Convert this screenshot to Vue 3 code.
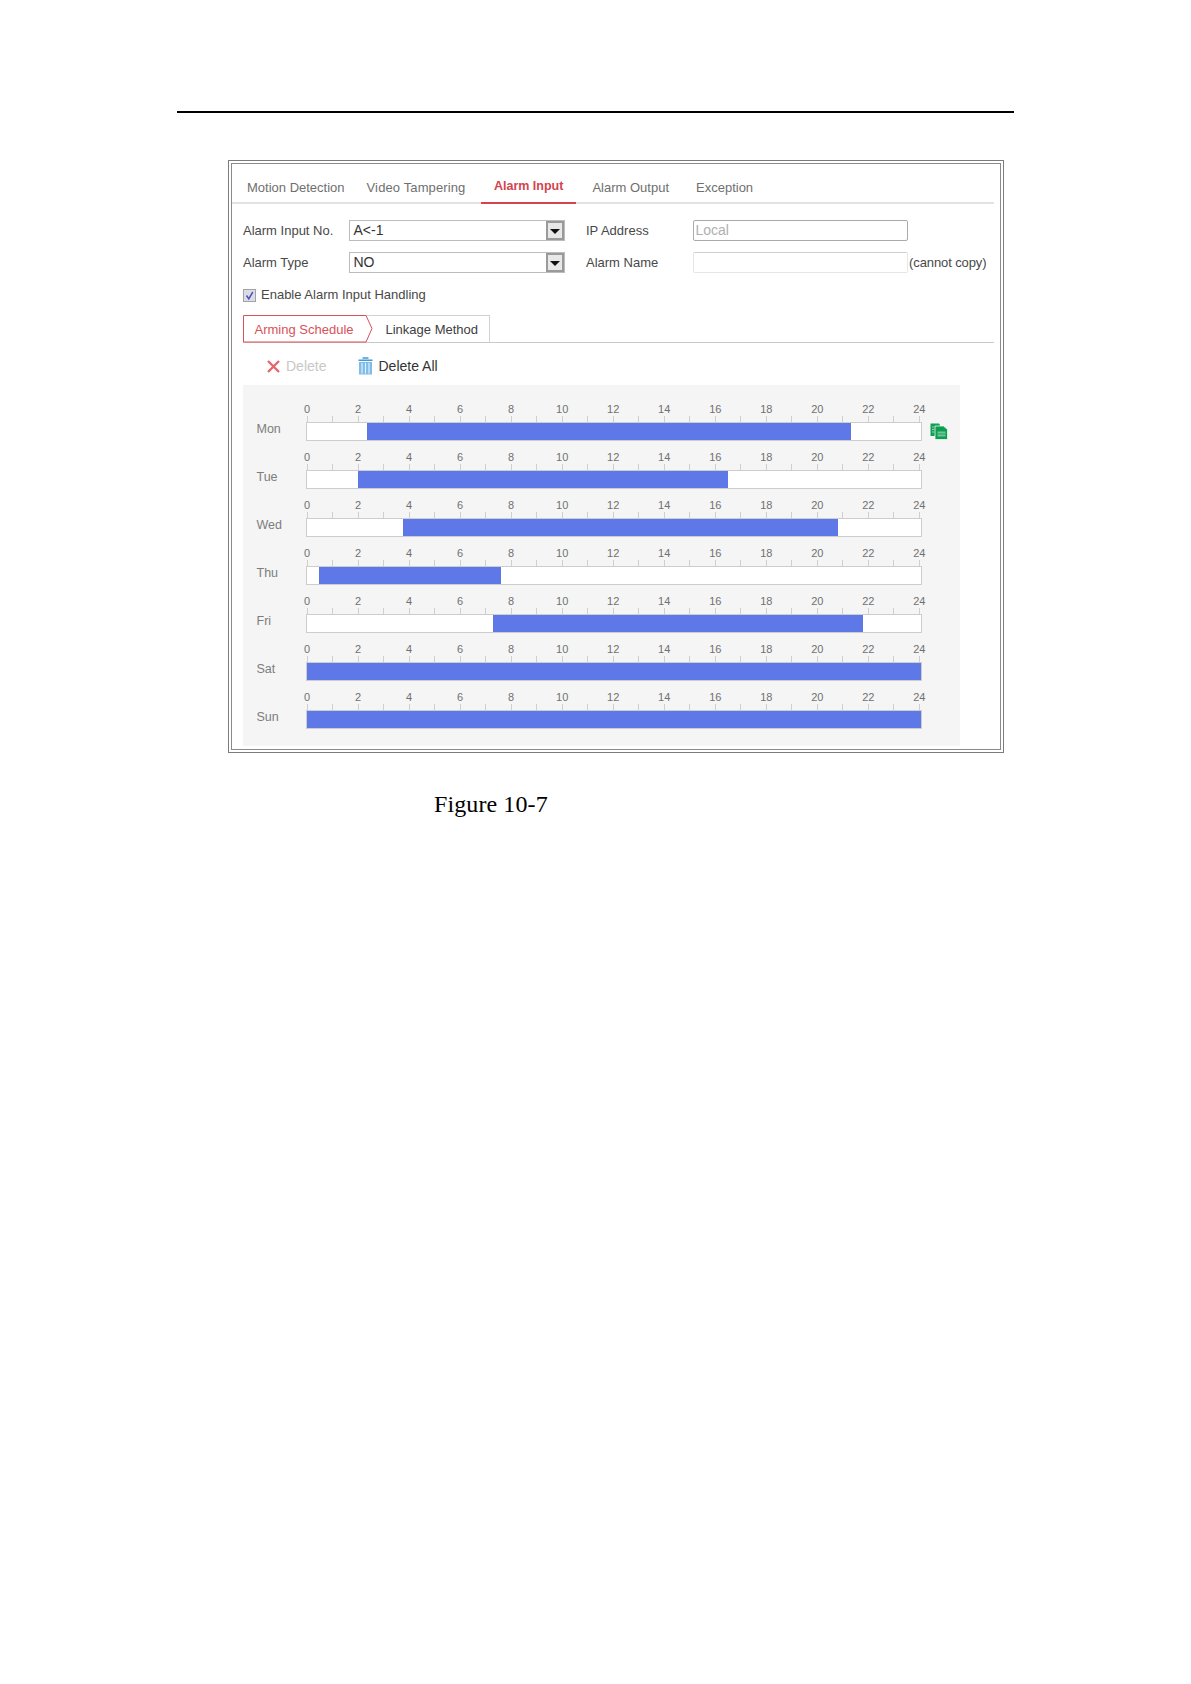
<script setup>
const tabs = [
  { label: 'Motion Detection' },
  { label: 'Video Tampering' },
  { label: 'Alarm Input', active: true },
  { label: 'Alarm Output' },
  { label: 'Exception' }
]
const hourLabels = [0, 2, 4, 6, 8, 10, 12, 14, 16, 18, 20, 22, 24]
const ticks = Array.from({ length: 25 }, (_, i) => i)
const days = [
  { name: 'Mon', from: 2.36, to: 21.25, copy: true },
  { name: 'Tue', from: 2.0, to: 16.46 },
  { name: 'Wed', from: 3.75, to: 20.77 },
  { name: 'Thu', from: 0.5, to: 7.58 },
  { name: 'Fri', from: 7.28, to: 21.75 },
  { name: 'Sat', from: 0, to: 24 },
  { name: 'Sun', from: 0, to: 24 }
]
const fillStyle = (d) => ({
  marginLeft: (d.from / 24) * 100 + '%',
  width: ((d.to - d.from) / 24) * 100 + '%'
})
</script>

<template>
  <div class="page">
    <div class="rule"></div>
    <div class="frame">
      <div class="inner">
        <div class="tabs">
          <div v-for="t in tabs" :key="t.label" class="tab" :class="{ active: t.active }">{{ t.label }}</div>
        </div>

        <div class="form">
          <div class="label">Alarm Input No.</div>
          <div class="select"><span>A&lt;-1</span><i class="drop"></i></div>
          <div class="label far">IP Address</div>
          <div class="input ip">Local</div>
          <div></div>

          <div class="label">Alarm Type</div>
          <div class="select"><span>NO</span><i class="drop"></i></div>
          <div class="label far">Alarm Name</div>
          <div class="input name"></div>
          <div class="label note">(cannot copy)</div>
        </div>

        <div class="check-row">
          <svg class="check" width="13" height="13" viewBox="0 0 13 13">
            <rect x="0.5" y="0.5" width="12" height="12" fill="#dcdce4" stroke="#a2a2ac" />
            <path d="M3.5 6.5 L5.8 9.8 L9.8 3" fill="none" stroke="#4a55b8" stroke-width="1.5" />
          </svg>
          <span>Enable Alarm Input Handling</span>
        </div>

        <div class="subtabs">
          <div class="sub active">
            <svg class="chevron" width="130" height="28" viewBox="0 0 130 28">
              <path d="M0.5 0.5 H123 L129 13.5 L123 27 H0.5 Z" fill="#fff" stroke="#d9505a" />
            </svg>
            <span class="sub-text">Arming Schedule</span>
          </div>
          <div class="sub link">Linkage Method</div>
        </div>

        <div class="actions">
          <svg class="x-icon" width="13" height="13" viewBox="0 0 13 13">
            <path d="M1 1 L12 12 M12 1 L1 12" stroke="#e8636a" stroke-width="2.3" fill="none" />
          </svg>
          <span class="del off">Delete</span>
          <svg class="trash" width="15" height="18" viewBox="0 0 15 18">
            <path d="M4.5 1 H10.5 M0.5 3.2 H14.5" stroke="#3d9bdc" stroke-width="1.6" fill="none" />
            <path d="M1 5 H14 V17.5 H1 Z" fill="#7fbce8" />
            <path d="M4 6 V16.5 M7.5 6 V16.5 M11 6 V16.5" stroke="#e6f2fb" stroke-width="1.1" fill="none" />
          </svg>
          <span class="del on">Delete All</span>
        </div>

        <div class="panel">
          <div v-for="d in days" :key="d.name" class="day">
            <div class="ruler">
              <div class="nums"><span v-for="h in hourLabels" :key="h" class="num"><b>{{ h }}</b></span></div>
              <div class="ticks"><i v-for="k in ticks" :key="k" class="tick"></i></div>
            </div>
            <div class="day-name">{{ d.name }}</div>
            <div class="bar"><div class="fill" :style="fillStyle(d)"></div></div>
            <svg v-if="d.copy" class="copy" width="18" height="17" viewBox="0 0 18 17">
              <path d="M0.5 0.5 H9 L10 2 V13 H0.5 Z" fill="#129e55" />
              <path d="M5 3 H13.5 L17.5 6.5 V16.5 H5 Z" fill="#0c9e50" stroke="#f5f5f5" stroke-width="0.8" />
              <path d="M7.5 8.5 H15.5 V13.5 H7.5 Z" fill="#6cc796" />
              <path d="M7.5 11 H15.5" stroke="#0c9e50" stroke-width="0.8" />
              <path d="M2 4 H4 M2 6.5 H4 M2 9 H4" stroke="#8fd3ae" stroke-width="1" />
            </svg>
          </div>
        </div>
      </div>
    </div>
    <div class="caption">Figure 10-7</div>
  </div>
</template>

<style>
html, body { margin: 0; background: #fff; }
</style>

<style scoped>
* { box-sizing: border-box; }
.page {
  width: 1191px;
  height: 1684px;
  padding-top: 111px;
  background: #fff;
  font-family: "Liberation Sans", Arial, sans-serif;
  font-size: 13px;
  color: #444;
  overflow: hidden;
}
.rule { height: 2px; margin: 0 177px; background: #000; }
.frame {
  width: 776px;
  height: 593px;
  margin: 47px 0 0 228px;
  border: 1px solid #7c7c7c;
  padding: 2px;
}
.inner { height: 100%; border: 1px solid #8a8a8a; background: #fff; }

.tabs {
  display: flex;
  height: 40px;
  margin-right: 6px;
  padding-left: 3.5px;
  border-bottom: 2px solid #e2e2e2;
}
.tab {
  height: 40px;
  padding: 14px 11.5px 0;
  line-height: 20px;
  color: #6f6f6f;
}
.tab:nth-child(2) { margin-left: -1px; letter-spacing: 0.12px; }
.tab:nth-child(5) { margin-left: 4px; }
.tab.active {
  margin: 0 5px 0 4.5px;
  padding: 12px 12.5px 0;
  font-size: 12.5px;
  font-weight: bold;
  color: #d4434f;
  border-bottom: 2px solid #d4434f;
}

.form {
  display: grid;
  grid-template-columns: 106px 216px 128px 215px auto;
  grid-auto-rows: 21px;
  row-gap: 11px;
  margin: 16px 0 0 11px;
}
.label { line-height: 21px; color: #484848; }
.label.far { margin-left: 21px; }
.select {
  display: flex;
  justify-content: space-between;
  border: 1px solid #bcbcbc;
  padding-left: 3.5px;
  font-size: 14px;
  line-height: 19px;
  color: #333;
}
.drop {
  position: relative;
  width: 18px;
  height: 19px;
  border: 2px solid #9a9a9a;
  background: #e8e8e8;
}
.drop::after {
  content: "";
  position: absolute;
  left: 2px;
  top: 6px;
  border: 5px solid transparent;
  border-top: 5px solid #111;
  border-bottom: 0;
}
.input {
  border-radius: 2px;
  padding-left: 1.5px;
  font-size: 14px;
  line-height: 19px;
}
.input.ip { border: 1px solid #aaa; color: #b0b0b0; }
.input.name { border: 1px solid #e6e6e6; border-top-color: #cfcfcf; }
.note { padding-left: 1px; white-space: nowrap; letter-spacing: -0.1px; }

.check-row {
  display: flex;
  align-items: center;
  gap: 5px;
  height: 20px;
  margin: 11px 0 0 11px;
  color: #484848;
}
.check { margin-top: 2px; }

.subtabs {
  display: flex;
  height: 28px;
  margin: 11px 6px 0 11px;
  border-bottom: 1px solid #c9c9c9;
}
.sub { height: 27px; line-height: 29px; }
.sub.active { position: relative; z-index: 1; width: 129px; height: 28px; color: #d9505a; }
.chevron { position: absolute; left: 0; top: 0; }
.sub-text { position: relative; display: block; padding-left: 11.5px; }
.sub.link {
  width: 124px;
  margin-left: -6px;
  padding-left: 19.5px;
  line-height: 27px;
  border-top: 1px solid #d2d2d2;
  border-right: 1px solid #d2d2d2;
  color: #404040;
}

.actions {
  display: flex;
  align-items: center;
  height: 20px;
  margin: 13px 0 0 11px;
  padding-left: 23.5px;
}
.del { font-size: 14px; line-height: 20px; }
.del.off { margin-left: 6.5px; width: 71.5px; color: #c8c8c8; }
.del.on { margin-left: 6px; color: #333; }

.panel {
  width: 717px;
  margin: 9px 0 0 11px;
  padding: 17px 0 17px;
  background: #f5f5f5;
}
.day {
  display: grid;
  grid-template-columns: 63px 616px auto;
  grid-template-rows: 20px 19px;
  margin-bottom: 9px;
}
.day:last-child { margin-bottom: 0; }
.ruler { grid-column: 2; grid-row: 1; padding-left: 0.5px; padding-right: 2px; }
.nums { display: flex; justify-content: space-between; height: 14px; }
.num { width: 1px; display: flex; justify-content: center; }
.num b { font-weight: normal; font-size: 11px; line-height: 14px; color: #707070; }
.ticks { display: flex; justify-content: space-between; height: 6px; }
.tick { width: 1px; background: #cfcfcf; }
.day-name {
  grid-column: 1;
  grid-row: 2;
  padding-left: 13.5px;
  font-size: 12.5px;
  line-height: 14px;
  color: #7d7d7d;
}
.bar {
  grid-column: 2;
  grid-row: 2;
  height: 19px;
  margin-left: -0.5px;
  border: 1px solid #cdcdcd;
  background: #fff;
}
.fill { height: 17px; background: #5f78e8; }
.copy { grid-column: 3; grid-row: 2; margin-left: 7.5px; margin-top: 1px; }

.caption {
  margin: 37px 0 0 434px;
  font-family: "Liberation Serif", "Times New Roman", serif;
  font-size: 24px;
  line-height: 28px;
  letter-spacing: 0.1px;
  color: #000;
}
</style>
